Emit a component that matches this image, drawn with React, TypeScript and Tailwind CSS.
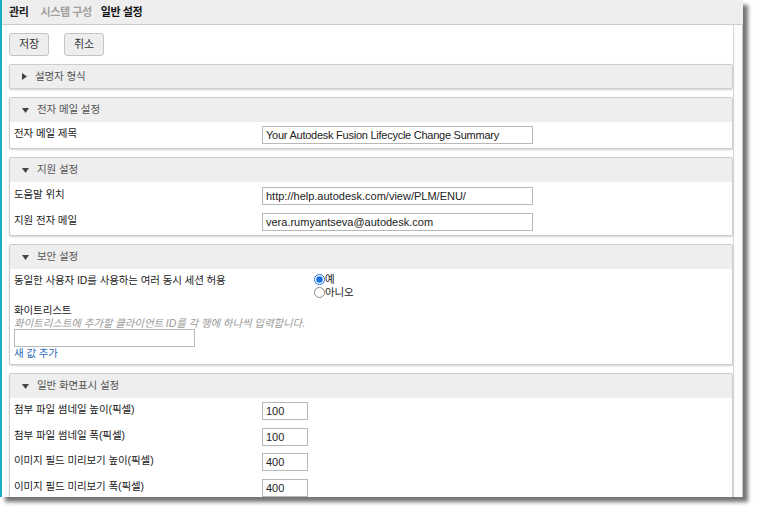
import React from "react";

const FONT = { fontFamily: '"Liberation Sans", "Noto Sans CJK KR", sans-serif' };

function TriDown() {
  return (
    <svg width="7" height="5" viewBox="0 0 7 5" className="shrink-0">
      <polygon points="0,0 7,0 3.5,5" fill="#444" />
    </svg>
  );
}
function TriRight() {
  return (
    <svg width="5" height="7" viewBox="0 0 5 7" className="shrink-0">
      <polygon points="0,0 5,3.5 0,7" fill="#444" />
    </svg>
  );
}

function Section({ title, open = true, children }: { title: string; open?: boolean; children?: React.ReactNode }) {
  return (
    <div className="mt-[8px] border border-[#cdcdcd] rounded-[2px] bg-white shadow-[0_1px_2px_rgba(0,0,0,0.18)]">
      <div className={`${open ? "h-[24px]" : "h-[23px]"} bg-[#eeeeee] flex items-center pl-[12px] gap-[8px] text-[#555] text-[10.5px] tracking-[-0.1px]`}>
        {open ? <TriDown /> : <TriRight />}
        <span>{title}</span>
      </div>
      {children}
    </div>
  );
}

function Row({ label, value, inputW = 271, rowH = 26, inputTop = 4, inputH = 18, track = "" }: { label: string; value: string; inputW?: number; rowH?: number; inputTop?: number; inputH?: number; track?: string }) {
  return (
    <div className="flex items-start pl-[4px]" style={{ height: rowH }}>
      <div className="w-[248px] pt-[1px] leading-[20px] text-[10.5px] tracking-[-0.1px] text-[#222]">{label}</div>
      <div
        className={`border border-[#b8b8b8] bg-white pl-[3px] text-[11px] text-[#222] flex items-center ${track}`}
        style={{ width: inputW, height: inputH, marginTop: inputTop }}
      >
        {value}
      </div>
    </div>
  );
}

function Radio({ checked }: { checked?: boolean }) {
  return (
    <svg width="11" height="11" viewBox="0 0 11 11" className="shrink-0">
      {checked ? (
        <>
          <circle cx="5.5" cy="5.5" r="5" fill="#fff" stroke="#1a6fe0" strokeWidth="1" />
          <circle cx="5.5" cy="5.5" r="3.2" fill="#1a6fe0" />
        </>
      ) : (
        <circle cx="5.5" cy="5.5" r="5" fill="#fff" stroke="#8a8a8a" strokeWidth="1" />
      )}
    </svg>
  );
}

export default function App() {
  return (
    <div className="w-[758px] h-[512px] bg-white overflow-hidden" style={FONT}>
      <div className="w-[743px] h-[497px] flex overflow-hidden bg-white shadow-[5px_5px_4px_rgba(0,0,0,0.55)]">
        <div className="w-[2px] bg-[#17aec6] shrink-0" />
        <div className="flex-1 flex flex-col min-w-0">
          <div className="h-[25px] shrink-0 bg-[#eeeeee] border-b border-[#cccccc] flex items-center pl-[7px] gap-[12px] text-[11px] tracking-[-0.4px] font-bold">
            <span className="text-[#222]">관리</span>
            <span className="text-[#a0a0a0]">시스템 구성</span>
            <span className="text-[#111] -ml-[3px]">일반 설정</span>
          </div>
          <div className="flex flex-1 min-h-0">
            <div className="flex-1 min-w-0 pl-[7px] overflow-hidden">
              <div className="flex gap-[15px] mt-[8px]">
                <button className="w-[40px] h-[23px] bg-[#eeeeee] border border-[#c4c4c4] rounded-[3px] text-[11px] text-[#333]">저장</button>
                <button className="w-[40px] h-[23px] bg-[#eeeeee] border border-[#c4c4c4] rounded-[3px] text-[11px] text-[#333]">취소</button>
              </div>
              <Section title="설명자 형식" open={false} />
              <Section title="전자 메일 설정">
                <Row label="전자 메일 제목" value="Your Autodesk Fusion Lifecycle Change Summary" track="tracking-[-0.25px]" />
              </Section>
              <Section title="지원 설정">
                <div className="pt-[1px]">
                  <Row label="도움말 위치" value="http://help.autodesk.com/view/PLM/ENU/" />
                  <Row label="지원 전자 메일" value="vera.rumyantseva@autodesk.com" />
                </div>
              </Section>
              <Section title="보안 설정">
                <div className="pl-[4px] pb-[5px] text-[10.5px] tracking-[-0.1px] text-[#222]">
                  <div className="flex items-start">
                    <div className="w-[300px] pt-[1px] leading-[20px]">동일한 사용자 ID를 사용하는 여러 동시 세션 허용</div>
                    <div className="mt-[4px] flex flex-col">
                      <div className="flex items-center h-[13px] leading-[13px]"><Radio checked /><span>예</span></div>
                      <div className="flex items-center h-[13px] leading-[13px]"><Radio /><span>아니오</span></div>
                    </div>
                  </div>
                  <div className="mt-[5px] leading-[13px]">화이트리스트</div>
                  <div className="leading-[13px] italic text-[#9a9a9a]">화이트리스트에 추가할 클라이언트 ID를 각 행에 하나씩 입력합니다.</div>
                  <div className="-mt-[1px] w-[181px] h-[18px] border border-[#b8b8b8] bg-white" />
                  <div className="leading-[11px] mt-[1px] text-[#2f6db5]">새 값 추가</div>
                </div>
              </Section>
              <Section title="일반 화면표시 설정">
                <Row label="첨부 파일 썸네일 높이(픽셀)" value="100" inputW={46} rowH={26} inputTop={4} inputH={18} />
                <Row label="첨부 파일 썸네일 폭(픽셀)" value="100" inputW={46} rowH={25} inputTop={4} inputH={18} />
                <Row label="이미지 필드 미리보기 높이(픽셀)" value="400" inputW={46} rowH={26} inputTop={4} inputH={18} />
                <Row label="이미지 필드 미리보기 폭(픽셀)" value="400" inputW={46} rowH={26} inputTop={4} inputH={18} />
              </Section>
            </div>
            <div className="w-[10px] shrink-0 border-l border-[#d6d6d6] border-r border-r-[#c4c4c4] bg-[#fbfbfb]" />
          </div>
        </div>
      </div>
    </div>
  );
}
